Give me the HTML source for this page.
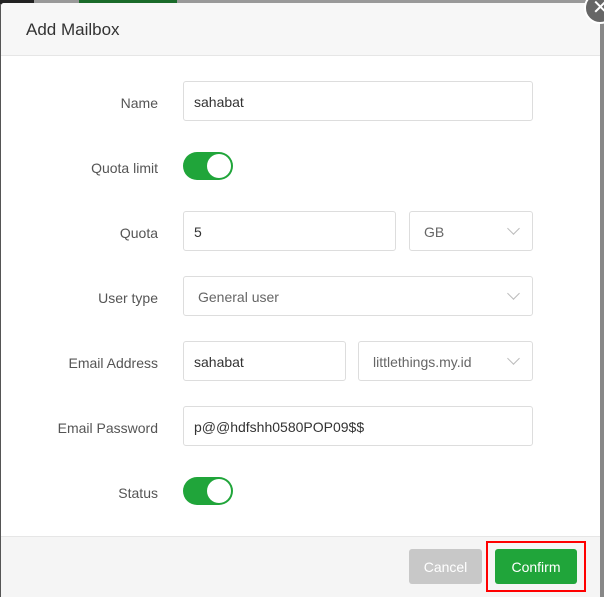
<!DOCTYPE html><html><head><style>
body{margin:0;width:604px;height:597px;overflow:hidden;background:#555;font-family:"Liberation Sans",sans-serif;position:relative}
.top{position:absolute;top:0;left:0;width:604px;height:4px;background:#999}
.m{position:absolute;left:1px;top:3px;width:599px;height:594px;background:#fff;border-radius:3px 3px 0 0;overflow:hidden}
.h{height:52px;background:#f7f7f7;border-bottom:1px solid #e6e6e6;font-size:17px;color:#333;line-height:54px;padding-left:25px}
.l{position:absolute;right:442px;font-size:14px;color:#555;text-align:right;white-space:nowrap}
.i{position:absolute;border:1px solid #ddd;border-radius:3px;box-sizing:border-box;height:40px;font-size:14px;color:#333;line-height:40px;padding-left:10px}
.s{color:#666;padding-left:14px}
.s:after{content:"";position:absolute;right:14px;top:12px;width:8px;height:8px;border-right:1px solid #bbb;border-bottom:1px solid #bbb;transform:rotate(45deg)}
.t{position:absolute;left:182px;width:50px;height:28px;border-radius:14px;background:#20a53a}
.t:after{content:"";position:absolute;right:2px;top:2px;width:24px;height:24px;border-radius:50%;background:#fff}
.f{position:absolute;left:0;top:533px;width:599px;height:61px;background:#f5f5f5;border-top:1px solid #e6e6e6}
.b{position:absolute;top:546px;height:35px;border-radius:3px;color:#fff;font-size:14px;line-height:37px;text-align:center}
</style></head><body>
<div class="top"><div style="position:absolute;left:0;width:34px;height:4px;background:#222"></div><div style="position:absolute;left:79px;width:98px;height:4px;background:#1a6b2a"></div></div>
<div class="m">
<div class="h">Add Mailbox</div>
<div class="l" style="top:92px">Name</div><div class="i" style="left:182px;top:78px;width:350px">sahabat</div>
<div class="l" style="top:157px">Quota limit</div><div class="t" style="top:149px"></div>
<div class="l" style="top:222px">Quota</div><div class="i" style="left:182px;top:208px;width:213px">5</div><div class="i s" style="left:408px;top:208px;width:124px">GB</div>
<div class="l" style="top:287px">User type</div><div class="i s" style="left:182px;top:273px;width:350px">General user</div>
<div class="l" style="top:352px">Email Address</div><div class="i" style="left:182px;top:338px;width:163px">sahabat</div><div class="i s" style="left:357px;top:338px;width:175px">littlethings.my.id</div>
<div class="l" style="top:417px">Email Password</div><div class="i" style="left:182px;top:403px;width:350px">p@@hdfshh0580POP09$$</div>
<div class="l" style="top:482px">Status</div><div class="t" style="top:474px"></div>
<div class="f"></div>
<div class="b" style="left:408px;width:73px;background:#c8c8c8">Cancel</div>
<div style="position:absolute;left:485px;top:538px;width:96px;height:47px;border:2px solid #f00"></div>
<div class="b" style="left:494px;width:82px;background:#20a53a">Confirm</div>
</div>
<div style="position:absolute;left:600px;top:0;width:4px;height:597px;background:#888"></div>
<div style="position:absolute;left:584px;top:-8px;width:28px;height:28px;border-radius:50%;background:#666;border:2px solid #fff;color:#fff;font-size:20px;line-height:28px;text-indent:6px">✕</div>
</body></html>
